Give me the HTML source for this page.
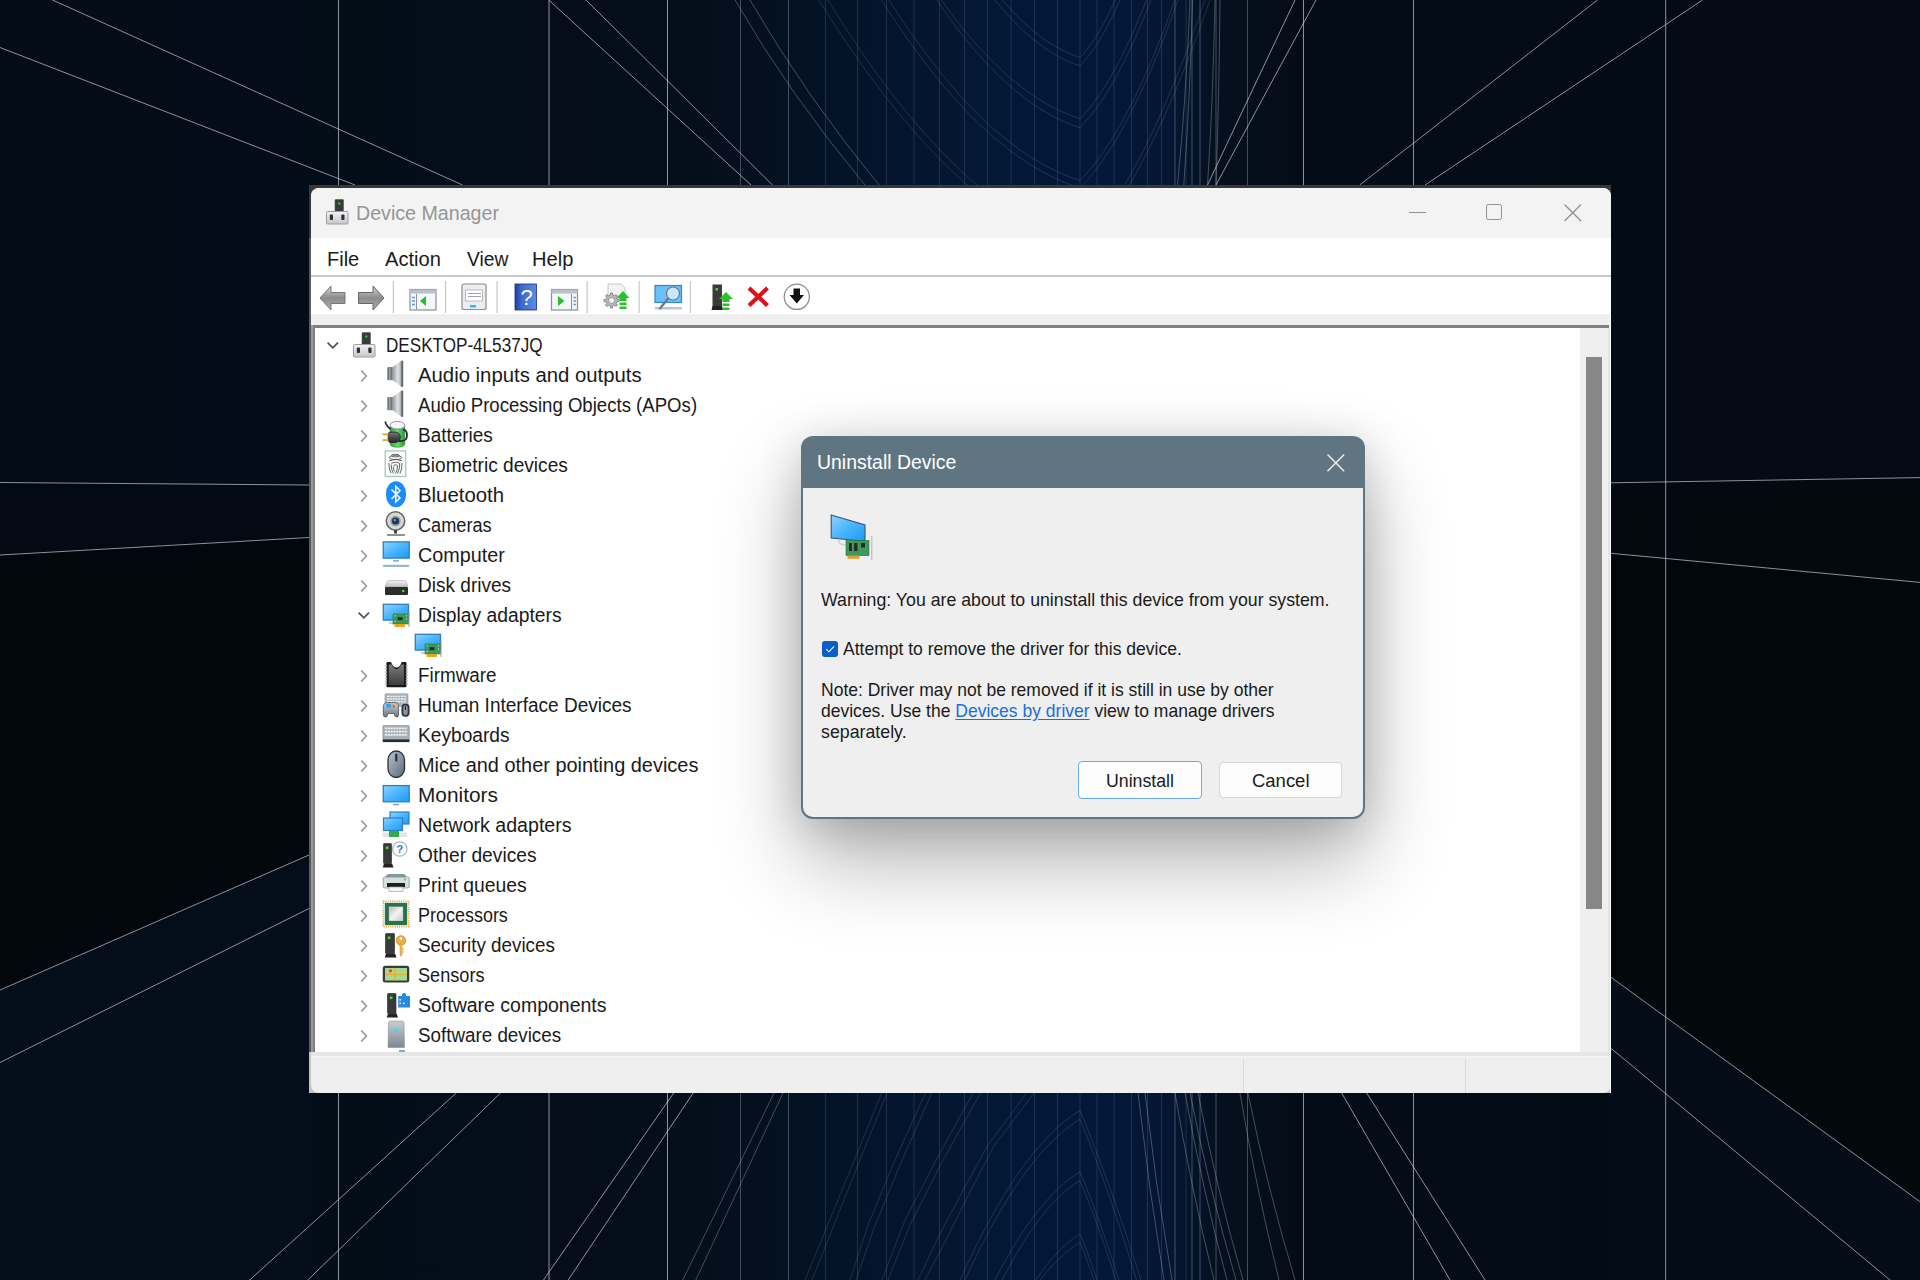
<!DOCTYPE html><html><head><meta charset="utf-8"><style>
html,body{margin:0;padding:0;}
body{width:1920px;height:1280px;overflow:hidden;position:relative;background:#030d19;font-family:"Liberation Sans", sans-serif;}
.a{position:absolute;}
.t{position:absolute;white-space:pre;}

</style></head><body>
<div class="a" style="left:0;top:0;width:1920px;height:1280px;background:linear-gradient(90deg,#030c17 0px,#040e1a 640px,#04101f 760px,#03142c 880px,#031835 980px,#03183a 1100px,#041632 1170px,#05101f 1215px,#040c17 1300px,#030a14 1920px);"></div>
<svg width="0" height="0" style="position:absolute"><defs>
<linearGradient id="gScr" x1="0" y1="0" x2="1" y2="1"><stop offset="0" stop-color="#8fd3ff"/><stop offset="0.5" stop-color="#4ab4ff"/><stop offset="1" stop-color="#1a9af5"/></linearGradient>
<linearGradient id="gSpk" x1="0" y1="0" x2="1" y2="0"><stop offset="0" stop-color="#5d636b"/><stop offset="0.45" stop-color="#b9bec4"/><stop offset="0.8" stop-color="#d8dcdf"/><stop offset="1" stop-color="#7a8088"/></linearGradient>
<linearGradient id="gBase" x1="0" y1="0" x2="0" y2="1"><stop offset="0" stop-color="#f2f2f4"/><stop offset="1" stop-color="#c4c6ca"/></linearGradient>
<linearGradient id="gMouse" x1="0" y1="0" x2="1" y2="1"><stop offset="0" stop-color="#b8c4d0"/><stop offset="1" stop-color="#5a6878"/></linearGradient>
<linearGradient id="gTower" x1="0" y1="0" x2="0" y2="1"><stop offset="0" stop-color="#c8ced6"/><stop offset="1" stop-color="#7d8791"/></linearGradient>
<linearGradient id="gDisk" x1="0" y1="0" x2="0" y2="1"><stop offset="0" stop-color="#f4f4f4"/><stop offset="1" stop-color="#bdbdbd"/></linearGradient>
<linearGradient id="gGreen" x1="0" y1="0" x2="1" y2="0"><stop offset="0" stop-color="#2a9a3a"/><stop offset="0.5" stop-color="#6ad86a"/><stop offset="1" stop-color="#2a9a3a"/></linearGradient>
<linearGradient id="gBack" x1="0" y1="0" x2="0" y2="1"><stop offset="0" stop-color="#d4d4d4"/><stop offset="0.5" stop-color="#8c8c8c"/><stop offset="1" stop-color="#b0b0b0"/></linearGradient>
<linearGradient id="gHelp" x1="0" y1="0" x2="1" y2="0"><stop offset="0" stop-color="#1f3f9a"/><stop offset="0.3" stop-color="#3a6ad0"/><stop offset="1" stop-color="#5a8ae8"/></linearGradient>
<linearGradient id="gMag" x1="0" y1="0" x2="1" y2="0"><stop offset="0" stop-color="#4e5660"/><stop offset="0.5" stop-color="#9aa2aa"/><stop offset="1" stop-color="#5a626a"/></linearGradient>
<linearGradient id="gCone" x1="0" y1="0" x2="1" y2="0"><stop offset="0" stop-color="#8a9096"/><stop offset="0.6" stop-color="#dfe1e3"/><stop offset="1" stop-color="#b4b8bc"/></linearGradient>
<linearGradient id="gRim" x1="0" y1="0" x2="1" y2="0"><stop offset="0" stop-color="#9aa0a6"/><stop offset="0.5" stop-color="#6a7076"/><stop offset="1" stop-color="#50565c"/></linearGradient>
<linearGradient id="gPlug" x1="0" y1="0" x2="0" y2="1"><stop offset="0" stop-color="#7a7a7a"/><stop offset="0.5" stop-color="#4a4a4a"/><stop offset="1" stop-color="#2a2a2a"/></linearGradient>
<linearGradient id="gChip" x1="0" y1="0" x2="1" y2="1"><stop offset="0" stop-color="#b8b8b8"/><stop offset="0.5" stop-color="#f4f4f4"/><stop offset="1" stop-color="#c8c8c8"/></linearGradient>
<linearGradient id="gFw" x1="0" y1="0" x2="0" y2="1"><stop offset="0" stop-color="#7a7a7a"/><stop offset="1" stop-color="#3c3c3c"/></linearGradient>
<linearGradient id="gPad" x1="0" y1="0" x2="0" y2="1"><stop offset="0" stop-color="#c8d0d8"/><stop offset="1" stop-color="#6a7682"/></linearGradient>
</defs></svg>
<svg style="position:absolute;left:0;top:0" width="1920" height="1280" viewBox="0 0 1920 1280" shape-rendering="geometricPrecision"><polygon points="0,555 309,537.5 309,855 0,990" fill="#02070d"/><polygon points="0,482.5 309,485 309,537.5 0,555" fill="#040a13"/><polygon points="0,990 309,855 309,1280 0,1280" fill="#030e1a"/><polygon points="1611,553.3 1920,582.4 1920,1201.7 1611,977.3" fill="#02070c"/><polygon points="1611,482.8 1920,477.6 1920,582.4 1611,553.3" fill="#03090f"/><polygon points="1611,977.3 1920,1201.7 1920,1280 1611,1280" fill="#040c17"/><line x1="338.5" y1="0" x2="338.5" y2="1280" stroke="rgba(205,210,218,0.68)"/><line x1="549" y1="0" x2="549" y2="1280" stroke="rgba(205,210,218,0.68)"/><line x1="667.5" y1="0" x2="667.5" y2="1280" stroke="rgba(205,210,218,0.68)"/><line x1="740.5" y1="0" x2="740.5" y2="1280" stroke="rgba(170,180,195,0.38)"/><line x1="788.5" y1="0" x2="788.5" y2="1280" stroke="rgba(170,180,195,0.38)"/><line x1="825.5" y1="0" x2="825.5" y2="1280" stroke="rgba(130,150,175,0.22)"/><line x1="857.5" y1="0" x2="857.5" y2="1280" stroke="rgba(130,150,175,0.22)"/><line x1="886.5" y1="0" x2="886.5" y2="1280" stroke="rgba(130,150,175,0.22)"/><line x1="914" y1="0" x2="914" y2="1280" stroke="rgba(130,150,175,0.22)"/><line x1="939.5" y1="0" x2="939.5" y2="1280" stroke="rgba(130,150,175,0.22)"/><line x1="964.5" y1="0" x2="964.5" y2="1280" stroke="rgba(130,150,175,0.22)"/><line x1="987.5" y1="0" x2="987.5" y2="1280" stroke="rgba(130,150,175,0.22)"/><line x1="1011" y1="0" x2="1011" y2="1280" stroke="rgba(130,150,175,0.22)"/><line x1="1034.5" y1="0" x2="1034.5" y2="1280" stroke="rgba(130,150,175,0.22)"/><line x1="1057.5" y1="0" x2="1057.5" y2="1280" stroke="rgba(130,150,175,0.22)"/><line x1="1080" y1="0" x2="1080" y2="1280" stroke="rgba(130,150,175,0.22)"/><line x1="1097" y1="0" x2="1097" y2="1280" stroke="rgba(130,150,175,0.22)"/><line x1="1114" y1="0" x2="1114" y2="1280" stroke="rgba(130,150,175,0.22)"/><line x1="1131.5" y1="0" x2="1131.5" y2="1280" stroke="rgba(130,150,175,0.22)"/><line x1="1147.5" y1="0" x2="1147.5" y2="1280" stroke="rgba(130,150,175,0.22)"/><line x1="1161.5" y1="0" x2="1161.5" y2="1280" stroke="rgba(130,150,175,0.22)"/><line x1="1175" y1="0" x2="1175" y2="1280" stroke="rgba(170,180,195,0.38)"/><line x1="1186" y1="0" x2="1186" y2="1280" stroke="rgba(130,150,175,0.22)"/><line x1="1192" y1="0" x2="1192" y2="1280" stroke="rgba(170,180,195,0.38)"/><line x1="1200" y1="0" x2="1200" y2="1280" stroke="rgba(170,180,195,0.38)"/><line x1="1216" y1="0" x2="1216" y2="1280" stroke="rgba(170,180,195,0.38)"/><line x1="1247.5" y1="0" x2="1247.5" y2="1280" stroke="rgba(170,180,195,0.38)"/><line x1="1303.5" y1="0" x2="1303.5" y2="1280" stroke="rgba(205,210,218,0.68)"/><line x1="1413.5" y1="0" x2="1413.5" y2="1280" stroke="rgba(205,210,218,0.68)"/><line x1="1665.7" y1="0" x2="1665.7" y2="1280" stroke="rgba(205,210,218,0.68)"/><line x1="774" y1="1093" x2="682.8" y2="1280" stroke="rgba(170,180,195,0.38)"/><line x1="783" y1="1093" x2="695.8" y2="1280" stroke="rgba(170,180,195,0.38)"/><line x1="52.5" y1="0" x2="462.5" y2="185" stroke="rgba(205,210,218,0.68)"/><line x1="0" y1="47.5" x2="355" y2="185" stroke="rgba(205,210,218,0.68)"/><line x1="548.75" y1="0" x2="751" y2="185" stroke="rgba(205,210,218,0.68)"/><line x1="586" y1="0" x2="772.5" y2="185" stroke="rgba(205,210,218,0.68)"/><line x1="1295" y1="0" x2="1207.5" y2="185" stroke="rgba(205,210,218,0.68)"/><line x1="1316" y1="0" x2="1216" y2="185" stroke="rgba(205,210,218,0.68)"/><line x1="1597.5" y1="0" x2="1359.7" y2="185" stroke="rgba(205,210,218,0.68)"/><line x1="1702.5" y1="0" x2="1425" y2="185" stroke="rgba(205,210,218,0.68)"/><line x1="1611" y1="482.8" x2="1920" y2="477.6" stroke="rgba(205,210,218,0.68)"/><line x1="1611" y1="553.3" x2="1920" y2="582.4" stroke="rgba(205,210,218,0.68)"/><line x1="1611" y1="977.3" x2="1920" y2="1201.7" stroke="rgba(205,210,218,0.68)"/><line x1="1611" y1="1048.3" x2="1890" y2="1280" stroke="rgba(205,210,218,0.68)"/><line x1="0" y1="482.5" x2="309" y2="485" stroke="rgba(205,210,218,0.68)"/><line x1="0" y1="555" x2="309" y2="537.5" stroke="rgba(205,210,218,0.68)"/><line x1="0" y1="990" x2="309" y2="855" stroke="rgba(205,210,218,0.68)"/><line x1="0" y1="1062.5" x2="309" y2="908.5" stroke="rgba(205,210,218,0.68)"/><line x1="456.25" y1="1093" x2="247.5" y2="1282" stroke="rgba(205,210,218,0.68)"/><line x1="500.5" y1="1093" x2="307.8" y2="1280" stroke="rgba(205,210,218,0.68)"/><line x1="673.7" y1="1093" x2="543.5" y2="1280" stroke="rgba(205,210,218,0.68)"/><line x1="693.2" y1="1093" x2="568.2" y2="1280" stroke="rgba(205,210,218,0.68)"/><line x1="1341.7" y1="1093" x2="1450" y2="1280" stroke="rgba(205,210,218,0.68)"/><line x1="1366.7" y1="1093" x2="1485" y2="1280" stroke="rgba(205,210,218,0.68)"/><path d="M735,0 Q790,95 865,185" fill="none" stroke="rgba(170,180,195,0.38)"/><path d="M750,0 Q805,95 879,185" fill="none" stroke="rgba(170,180,195,0.38)"/><path d="M1190,0 Q1186,100 1177.5,185" fill="none" stroke="rgba(170,180,195,0.38)"/><path d="M1192.5,0 Q1190,100 1183.75,185" fill="none" stroke="rgba(170,180,195,0.38)"/><path d="M1215,0 Q1213,100 1207.5,185" fill="none" stroke="rgba(170,180,195,0.38)"/><path d="M1220,0 Q1219,100 1216,185" fill="none" stroke="rgba(170,180,195,0.38)"/><path d="M1080.0,245.0 L1064.2,239.5 L1048.5,232.6 L1032.7,224.5 L1017.0,215.0 L1001.2,204.3 L985.5,192.2 L969.7,178.9 L954.0,164.2 L938.2,148.2 L922.4,131.0 L906.7,112.4 L890.9,92.5 L875.2,71.4 L859.4,48.9 L843.7,25.1 L827.9,0.0 M1080.0,245.0 L1087.8,236.7 L1095.6,227.5 L1103.4,217.3 L1111.2,206.2 L1119.1,194.2 L1126.9,181.2 L1134.7,167.3 L1142.5,152.5 L1150.3,136.7 L1158.1,120.0 L1165.9,102.3 L1173.8,83.8 L1181.6,64.2 L1189.4,43.8 L1197.2,22.3 L1205.0,0.0" fill="none" stroke="rgba(130,150,175,0.22)"/><path d="M1080.0,252.0 L1063.7,246.3 L1047.4,239.2 L1031.0,230.8 L1014.7,221.1 L998.4,210.0 L982.1,197.6 L965.8,183.8 L949.5,168.8 L933.1,152.3 L916.8,134.6 L900.5,115.5 L884.2,95.1 L867.9,73.3 L851.5,50.2 L835.2,25.8 L818.9,-0.0 M1080.0,252.0 L1088.1,243.4 L1096.2,233.8 L1104.4,223.3 L1112.5,211.9 L1120.6,199.5 L1128.8,186.1 L1136.9,171.8 L1145.0,156.5 L1153.1,140.3 L1161.2,123.1 L1169.4,105.0 L1177.5,85.9 L1185.6,65.8 L1193.8,44.8 L1201.9,22.9 L1210.0,0.0" fill="none" stroke="rgba(130,150,175,0.22)"/><path d="M1080.0,57.4 L1075.2,55.8 L1070.3,53.9 L1065.5,51.7 L1060.6,49.3 L1055.8,46.6 L1050.9,43.7 L1046.0,40.5 L1041.2,37.0 L1036.3,33.3 L1031.5,29.3 L1026.7,25.1 L1021.8,20.6 L1016.9,15.8 L1012.1,10.8 L1007.2,5.5 L1002.4,-0.0 M1080.0,57.4 L1082.2,55.1 L1084.4,52.7 L1086.6,50.0 L1088.8,47.2 L1090.9,44.3 L1093.1,41.1 L1095.3,37.8 L1097.5,34.3 L1099.7,30.6 L1101.9,26.8 L1104.1,22.8 L1106.2,18.6 L1108.4,14.2 L1110.6,9.6 L1112.8,4.9 L1115.0,0.0" fill="none" stroke="rgba(130,150,175,0.22)"/><path d="M1080.0,65.7 L1074.7,63.9 L1069.4,61.8 L1064.0,59.4 L1058.7,56.6 L1053.4,53.6 L1048.1,50.3 L1042.8,46.6 L1037.5,42.7 L1032.1,38.4 L1026.8,33.9 L1021.5,29.0 L1016.2,23.8 L1010.9,18.3 L1005.5,12.5 L1000.2,6.4 L994.9,0.0 M1080.0,65.7 L1082.5,63.1 L1085.0,60.3 L1087.5,57.3 L1090.0,54.1 L1092.5,50.7 L1095.0,47.1 L1097.5,43.3 L1100.0,39.3 L1102.5,35.1 L1105.0,30.7 L1107.5,26.1 L1110.0,21.2 L1112.5,16.2 L1115.0,11.0 L1117.5,5.6 L1120.0,0.0" fill="none" stroke="rgba(130,150,175,0.22)"/><path d="M1080.0,118.6 L1071.3,115.6 L1062.7,112.0 L1054.0,107.9 L1045.3,103.1 L1036.6,97.8 L1028.0,91.8 L1019.3,85.3 L1010.6,78.2 L1001.9,70.5 L993.2,62.2 L984.6,53.3 L975.9,43.8 L967.2,33.8 L958.6,23.1 L949.9,11.8 L941.2,0.0 M1080.0,118.6 L1084.2,114.2 L1088.3,109.5 L1092.5,104.3 L1096.6,98.7 L1100.8,92.7 L1104.9,86.3 L1109.1,79.5 L1113.2,72.3 L1117.4,64.7 L1121.6,56.7 L1125.7,48.3 L1129.9,39.4 L1134.0,30.2 L1138.2,20.5 L1142.3,10.5 L1146.5,0.0" fill="none" stroke="rgba(130,150,175,0.22)"/><path d="M1080.0,127.6 L1071.0,124.5 L1062.1,120.7 L1053.1,116.3 L1044.2,111.3 L1035.2,105.6 L1026.3,99.2 L1017.3,92.2 L1008.4,84.6 L999.4,76.3 L990.4,67.3 L981.5,57.7 L972.5,47.5 L963.6,36.6 L954.6,25.0 L945.7,12.8 L936.7,0.0 M1080.0,127.6 L1084.4,122.9 L1088.9,117.8 L1093.3,112.3 L1097.8,106.3 L1102.2,99.9 L1106.6,93.0 L1111.1,85.7 L1115.5,77.9 L1119.9,69.8 L1124.4,61.1 L1128.8,52.0 L1133.2,42.5 L1137.7,32.5 L1142.1,22.1 L1146.6,11.3 L1151.0,0.0" fill="none" stroke="rgba(130,150,175,0.22)"/><path d="M1080.0,180.5 L1068.1,176.3 L1056.1,171.2 L1044.2,165.1 L1032.2,158.1 L1020.3,150.2 L1008.4,141.2 L996.4,131.4 L984.5,120.6 L972.6,108.8 L960.6,96.1 L948.7,82.5 L936.8,67.9 L924.8,52.3 L912.9,35.8 L900.9,18.4 L889.0,0.0 M1080.0,180.5 L1085.9,174.2 L1091.9,167.3 L1097.8,159.7 L1103.8,151.4 L1109.7,142.5 L1115.6,132.9 L1121.6,122.6 L1127.5,111.6 L1133.4,100.0 L1139.4,87.7 L1145.3,74.8 L1151.2,61.2 L1157.2,46.9 L1163.1,31.9 L1169.1,16.3 L1175.0,0.0" fill="none" stroke="rgba(130,150,175,0.22)"/><path d="M1080.0,188.0 L1067.6,183.7 L1055.2,178.3 L1042.8,172.0 L1030.4,164.7 L1018.0,156.4 L1005.6,147.1 L993.2,136.9 L980.8,125.6 L968.4,113.4 L956.0,100.1 L943.6,85.9 L931.2,70.7 L918.8,54.5 L906.4,37.3 L894.0,19.2 L881.6,0.0 M1080.0,188.0 L1086.1,181.5 L1092.2,174.3 L1098.4,166.5 L1104.5,157.9 L1110.6,148.6 L1116.8,138.6 L1122.9,127.9 L1129.0,116.5 L1135.1,104.4 L1141.2,91.6 L1147.4,78.1 L1153.5,63.9 L1159.6,49.0 L1165.8,33.3 L1171.9,17.0 L1178.0,0.0" fill="none" stroke="rgba(130,150,175,0.22)"/><path d="M1080.0,1110.5 L1072.5,1115.4 L1065.0,1121.0 L1057.5,1127.4 L1050.0,1134.6 L1042.5,1142.5 L1035.0,1151.2 L1027.5,1160.7 L1020.0,1170.9 L1012.5,1181.8 L1005.0,1193.6 L997.5,1206.1 L990.0,1219.3 L982.5,1233.4 L975.0,1248.1 L967.5,1263.7 L960.0,1280.0 M1080.0,1110.5 L1083.8,1119.7 L1087.6,1129.1 L1091.4,1138.7 L1095.2,1148.5 L1099.0,1158.5 L1102.8,1168.6 L1106.6,1178.9 L1110.5,1189.4 L1114.3,1200.1 L1118.1,1211.0 L1121.9,1222.0 L1125.7,1233.2 L1129.5,1244.7 L1133.3,1256.3 L1137.1,1268.0 L1140.9,1280.0" fill="none" stroke="rgba(130,150,175,0.22)"/><path d="M1080.0,1119.3 L1072.8,1124.0 L1065.6,1129.4 L1058.4,1135.5 L1051.2,1142.3 L1044.1,1149.8 L1036.9,1158.1 L1029.7,1167.0 L1022.5,1176.7 L1015.3,1187.1 L1008.1,1198.2 L1000.9,1210.1 L993.8,1222.6 L986.6,1235.9 L979.4,1249.9 L972.2,1264.6 L965.0,1280.0 M1080.0,1119.3 L1083.5,1127.9 L1087.1,1136.6 L1090.6,1145.6 L1094.1,1154.8 L1097.7,1164.1 L1101.2,1173.7 L1104.7,1183.4 L1108.2,1193.4 L1111.8,1203.5 L1115.3,1213.9 L1118.8,1224.4 L1122.4,1235.1 L1125.9,1246.0 L1129.4,1257.2 L1133.0,1268.5 L1136.5,1280.0" fill="none" stroke="rgba(130,150,175,0.22)"/><path d="M1080.0,1171.8 L1074.7,1175.2 L1069.4,1179.1 L1064.0,1183.4 L1058.7,1188.1 L1053.4,1193.3 L1048.1,1199.0 L1042.8,1205.1 L1037.5,1211.6 L1032.1,1218.6 L1026.8,1226.0 L1021.5,1233.9 L1016.2,1242.2 L1010.9,1251.0 L1005.5,1260.2 L1000.2,1269.9 L994.9,1280.0 M1080.0,1171.8 L1082.4,1177.7 L1084.9,1183.7 L1087.3,1189.9 L1089.8,1196.1 L1092.2,1202.5 L1094.6,1209.0 L1097.1,1215.5 L1099.5,1222.2 L1101.9,1229.1 L1104.4,1236.0 L1106.8,1243.1 L1109.2,1250.2 L1111.7,1257.5 L1114.1,1264.9 L1116.6,1272.4 L1119.0,1280.0" fill="none" stroke="rgba(130,150,175,0.22)"/><path d="M1080.0,1180.6 L1075.1,1183.7 L1070.3,1187.3 L1065.4,1191.2 L1060.5,1195.6 L1055.7,1200.3 L1050.8,1205.5 L1046.0,1211.1 L1041.1,1217.1 L1036.2,1223.5 L1031.4,1230.4 L1026.5,1237.6 L1021.7,1245.3 L1016.8,1253.3 L1011.9,1261.8 L1007.1,1270.7 L1002.2,1280.0 M1080.0,1180.6 L1082.2,1186.1 L1084.5,1191.6 L1086.8,1197.3 L1089.0,1203.0 L1091.2,1208.9 L1093.5,1214.8 L1095.8,1220.9 L1098.0,1227.0 L1100.2,1233.3 L1102.5,1239.7 L1104.8,1246.1 L1107.0,1252.7 L1109.2,1259.4 L1111.5,1266.2 L1113.8,1273.0 L1116.0,1280.0" fill="none" stroke="rgba(130,150,175,0.22)"/><path d="M1080.0,1233.9 L1077.2,1235.6 L1074.5,1237.5 L1071.7,1239.6 L1069.0,1241.8 L1066.2,1244.1 L1063.4,1246.6 L1060.7,1249.3 L1057.9,1252.1 L1055.1,1255.0 L1052.4,1258.1 L1049.6,1261.4 L1046.8,1264.8 L1044.1,1268.4 L1041.3,1272.1 L1038.6,1276.0 L1035.8,1280.0 M1080.0,1233.9 L1081.1,1236.5 L1082.1,1239.1 L1083.2,1241.7 L1084.2,1244.4 L1085.3,1247.2 L1086.4,1249.9 L1087.4,1252.8 L1088.5,1255.6 L1089.6,1258.5 L1090.6,1261.5 L1091.7,1264.5 L1092.8,1267.5 L1093.8,1270.5 L1094.9,1273.7 L1095.9,1276.8 L1097.0,1280.0" fill="none" stroke="rgba(130,150,175,0.22)"/><path d="M1080.0,1242.6 L1077.5,1244.1 L1075.0,1245.8 L1072.5,1247.6 L1070.0,1249.4 L1067.5,1251.4 L1065.0,1253.5 L1062.5,1255.7 L1060.0,1257.9 L1057.6,1260.3 L1055.1,1262.8 L1052.6,1265.4 L1050.1,1268.1 L1047.6,1270.9 L1045.1,1273.9 L1042.6,1276.9 L1040.1,1280.0 M1080.0,1242.6 L1080.9,1244.7 L1081.8,1246.9 L1082.6,1249.0 L1083.5,1251.2 L1084.4,1253.5 L1085.2,1255.7 L1086.1,1258.0 L1087.0,1260.3 L1087.9,1262.7 L1088.8,1265.1 L1089.6,1267.5 L1090.5,1269.9 L1091.4,1272.4 L1092.2,1274.9 L1093.1,1277.4 L1094.0,1280.0" fill="none" stroke="rgba(130,150,175,0.22)"/><path d="M1026.7,1093 L987.7,1145.6 L964.6,1187.5 L940,1233.7 L918,1280" fill="none" stroke="rgba(130,150,175,0.22)" stroke-linejoin="round"/><path d="M1033.9,1093 L994,1146 L971,1190 L947,1238 L925,1280" fill="none" stroke="rgba(130,150,175,0.22)" stroke-linejoin="round"/><path d="M973.2,1093 L940,1152.8 L905,1220 L882,1280" fill="none" stroke="rgba(130,150,175,0.22)" stroke-linejoin="round"/><path d="M980.5,1093 L940,1165.8 L910,1225 L888,1280" fill="none" stroke="rgba(130,150,175,0.22)" stroke-linejoin="round"/><path d="M925.4,1093 L895,1160 L868,1225 L850,1280" fill="none" stroke="rgba(130,150,175,0.22)" stroke-linejoin="round"/><path d="M931.7,1093 L900,1165 L874,1228 L856,1280" fill="none" stroke="rgba(130,150,175,0.22)" stroke-linejoin="round"/><path d="M881.7,1093 L840,1195 L805,1280" fill="none" stroke="rgba(130,150,175,0.22)" stroke-linejoin="round"/><path d="M886.9,1093 L840,1209.7 L812,1280" fill="none" stroke="rgba(130,150,175,0.22)" stroke-linejoin="round"/><path d="M1138,1093 Q1148.4,1186 1164,1280" fill="none" stroke="rgba(170,180,195,0.38)"/><path d="M1145,1093 Q1155.8,1186 1172,1280" fill="none" stroke="rgba(170,180,195,0.38)"/><path d="M1175,1093 Q1190.6,1186 1214,1280" fill="none" stroke="rgba(170,180,195,0.38)"/><path d="M1185,1093 Q1201.8,1186 1227,1280" fill="none" stroke="rgba(170,180,195,0.38)"/><path d="M1190,1093 Q1208.4,1186 1236,1280" fill="none" stroke="rgba(170,180,195,0.38)"/><path d="M1198,1093 Q1216.0,1186 1243,1280" fill="none" stroke="rgba(170,180,195,0.38)"/><path d="M1240,1093 Q1255.6,1186 1279,1280" fill="none" stroke="rgba(170,180,195,0.38)"/><path d="M1248,1093 Q1266.8,1186 1295,1280" fill="none" stroke="rgba(170,180,195,0.38)"/></svg>
<div class="a" style="left:309px;top:185px;width:1302px;height:53px;background:#383838;"></div>
<div class="a" style="left:309px;top:1052px;width:1302px;height:41px;background:#c4c4c4;"></div>
<div class="a" style="left:311px;top:188px;width:1300px;height:905px;background:#efefef;border-radius:8px 8px 8px 8px;overflow:hidden;">
</div>
<div class="a" style="left:311px;top:188px;width:1300px;height:50px;background:#f3f3f3;border-radius:8px 8px 0 0;"></div>
<div class="a" style="left:309px;top:238px;width:2px;height:814px;background:#5a5a5a;"></div>
<div class="a" style="left:311px;top:238px;width:1300px;height:37px;background:#fff;"></div>
<div class="a" style="left:311px;top:275px;width:1300px;height:2px;background:#c9c9c9;"></div>
<div class="a" style="left:311px;top:277px;width:1300px;height:37px;background:#fff;"></div>
<div class="a" style="left:311px;top:314px;width:1300px;height:11px;background:#efefef;"></div>
<div class="a" style="left:311px;top:325px;width:1298px;height:3px;background:#808080;"></div>
<div class="a" style="left:311px;top:325px;width:2px;height:728px;background:#9a9a9a;"></div>
<div class="a" style="left:313px;top:325px;width:2px;height:728px;background:#808080;"></div>
<div class="a" style="left:315px;top:328px;width:1265px;height:724px;background:#fff;"></div>
<div class="a" style="left:1580px;top:328px;width:28px;height:724px;background:#efefef;"></div>
<div class="a" style="left:1608px;top:328px;width:2px;height:724px;background:#e4e4e4;"></div>
<div class="a" style="left:1610px;top:277px;width:1px;height:816px;background:#fff;"></div>
<div class="a" style="left:1586px;top:357px;width:16px;height:552px;background:#878787;"></div>
<div class="a" style="left:311px;top:1052px;width:1299px;height:4px;background:#e6e6e6;"></div>
<div class="a" style="left:311px;top:1056px;width:1299px;height:1px;background:#f4f4f4;"></div>
<div class="a" style="left:1243px;top:1059px;width:1px;height:34px;background:#dadada;"></div>
<div class="a" style="left:1465px;top:1059px;width:1px;height:34px;background:#dadada;"></div>
<svg class="a" style="left:326px;top:199px" width="23" height="26" viewBox="0 0 23 26"><rect x="9" y="0.5" width="8.5" height="12" rx="0.8" fill="#3a3a3a" stroke="#555" stroke-width="0.6"/><rect x="12.3" y="3.5" width="2" height="2" fill="#34d834"/><rect x="0.5" y="12.5" width="21.5" height="12.5" rx="1" fill="url(#gBase)" stroke="#9c9ea2" stroke-width="1"/><rect x="3.8" y="15.5" width="3.2" height="5.5" rx="1" fill="#303030"/><rect x="15.3" y="15.5" width="3.2" height="5.5" rx="1" fill="#303030"/></svg>
<div class="t" style="left:356.2px;top:203.25px;font-size:20.5px;line-height:20.5px;color:#959595;transform:scaleX(0.9580);transform-origin:0 0;">Device Manager</div>
<div class="a" style="left:1409px;top:212px;width:16.5px;height:1.2px;background:#909090;"></div>
<div class="a" style="left:1485.6px;top:204.3px;width:14px;height:14px;border:1.3px solid #929292;border-radius:2.5px;"></div>
<svg class="a" style="left:1560px;top:200px" width="26" height="26"><path d="M4.5,4.5 L21,21 M21,4.5 L4.5,21" stroke="#909090" stroke-width="1.3"/></svg>
<div class="t" style="left:326.5px;top:249.79px;font-size:19.5px;line-height:19.5px;color:#1a1a1a;transform:scaleX(1.0248);transform-origin:0 0;">File</div>
<div class="t" style="left:385.3px;top:249.79px;font-size:19.5px;line-height:19.5px;color:#1a1a1a;transform:scaleX(1.0313);transform-origin:0 0;">Action</div>
<div class="t" style="left:466.7px;top:249.79px;font-size:19.5px;line-height:19.5px;color:#1a1a1a;transform:scaleX(0.9852);transform-origin:0 0;">View</div>
<div class="t" style="left:531.6px;top:249.79px;font-size:19.5px;line-height:19.5px;color:#1a1a1a;transform:scaleX(1.0297);transform-origin:0 0;">Help</div>
<svg class="a" style="left:0;top:0" width="1920" height="330" viewBox="0 0 1920 330"><path d="M320,298 L331,286 L331,292.5 L345,292.5 L345,303.5 L331,303.5 L331,310 Z" fill="url(#gBack)" stroke="#777" stroke-width="1"/><path d="M384,298 L373,286 L373,292.5 L358.5,292.5 L358.5,303.5 L373,303.5 L373,310 Z" fill="url(#gBack)" stroke="#666" stroke-width="1"/><rect x="392.8" y="281" width="1.2" height="32" fill="#c8c8c8"/><rect x="444.9" y="281" width="1.2" height="32" fill="#c8c8c8"/><rect x="496.4" y="281" width="1.2" height="32" fill="#c8c8c8"/><rect x="586.5" y="281" width="1.2" height="32" fill="#c8c8c8"/><rect x="638.5" y="281" width="1.2" height="32" fill="#c8c8c8"/><rect x="689.8" y="281" width="1.2" height="32" fill="#c8c8c8"/><rect x="410" y="289.5" width="26" height="20.5" fill="#f4f6f8" stroke="#8a9098" stroke-width="1.2"/><rect x="410" y="289.5" width="26" height="4" fill="#b8c0c8"/><rect x="416" y="294" width="1" height="15.5" fill="#8a9098"/><path d="M412,297.5 H415 M412,301 H415 M412,304.5 H415" stroke="#5a9ae0" stroke-width="1.3"/><path d="M420,301 L426,296 L426,306 Z" fill="#2cbc2c"/><rect x="462" y="284" width="24" height="25.5" rx="2" fill="#eceef0" stroke="#8a8e92" stroke-width="1.2"/><rect x="465.5" y="290" width="17" height="11" fill="#fff" stroke="#a8acb0" stroke-width="0.8"/><path d="M468,293.5 H481 M468,296.5 H481" stroke="#a0a4a8" stroke-width="1"/><rect x="470" y="305" width="6" height="2.5" fill="#30b8f0"/><rect x="515" y="284" width="21.5" height="26" fill="url(#gHelp)" stroke="#1a2f80" stroke-width="0.8"/><text x="526.5" y="305" font-family="Liberation Sans" font-size="22" fill="#fff" text-anchor="middle">?</text><rect x="551.5" y="289.5" width="26" height="20.5" fill="#f4f6f8" stroke="#8a9098" stroke-width="1.2"/><rect x="551.5" y="289.5" width="26" height="4" fill="#b8c0c8"/><rect x="571" y="294" width="1" height="15.5" fill="#8a9098"/><path d="M573.5,297.5 H576 M573.5,301 H576 M573.5,304.5 H576" stroke="#5a9ae0" stroke-width="1.3"/><path d="M558,296 L564.5,301 L558,306 Z" fill="#2cbc2c"/><path d="M608,284 L621,284 L625,288 L625,298 L608,298 Z" fill="#f4f4f4" stroke="#bbb" stroke-width="0.8"/><path d="M616.97,299.28 L619.04,299.51 L619.04,301.49 L616.97,301.72 L616.23,303.50 L617.53,305.13 L616.13,306.53 L614.50,305.23 L612.72,305.97 L612.49,308.04 L610.51,308.04 L610.28,305.97 L608.50,305.23 L606.87,306.53 L605.47,305.13 L606.77,303.50 L606.03,301.72 L603.96,301.49 L603.96,299.51 L606.03,299.28 L606.77,297.50 L605.47,295.87 L606.87,294.47 L608.50,295.77 L610.28,295.03 L610.51,292.96 L612.49,292.96 L612.72,295.03 L614.50,295.77 L616.13,294.47 L617.53,295.87 L616.23,297.50 Z" fill="#b8b8b8" stroke="#7a7a7a" stroke-width="0.8"/><circle cx="611.5" cy="300.5" r="3" fill="#f4f4f4" stroke="#8a8a8a" stroke-width="0.8"/><path d="M616.5,298 L623,291 L629.5,298 Z" fill="#2cc02c"/><path d="M619.5,298 H626.5 V301 H619.5 Z M619.5,302.5 H626.5 V305 H619.5 Z M619.5,306.5 H626.5 V309 H619.5 Z" fill="#2cc02c"/><rect x="655" y="285.5" width="26.5" height="17" fill="#6cc0f8" stroke="#2a88d0" stroke-width="1.2"/><rect x="655" y="307" width="27" height="2.5" fill="#b8c8d8"/><circle cx="673" cy="293.5" r="6.5" fill="#c8e8ff" stroke="#777" stroke-width="1.2"/><path d="M668.5,298 L659.5,309" stroke="#777" stroke-width="2.4"/><rect x="712.5" y="284.5" width="9.5" height="22" fill="#3a3a3a"/><rect x="715.5" y="288" width="2.5" height="2.5" fill="#3ddc3d"/><path d="M711.5,310 L712.5,306 L722,306 L723,310 Z" fill="#222"/><path d="M719,299 L726,292 L733,299 Z" fill="#2cc02c"/><path d="M722.5,299 H729.5 V302 H722.5 Z M722.5,303.5 H729.5 V306 H722.5 Z M722.5,307.5 H729.5 V310 H722.5 Z" fill="#2cc02c"/><path d="M749,288 L767.5,305.5 M767.5,288 L749,305.5" stroke="#e0101a" stroke-width="4.2" stroke-linecap="butt"/><circle cx="796.8" cy="296.8" r="12.6" fill="#fff" stroke="#8a8a8a" stroke-width="1.2"/><path d="M793.5,288.5 H800 V295 H804 L796.8,303.5 L789.5,295 H793.5 Z" fill="#111"/></svg>
<svg class="a" style="left:324.5px;top:339.5px" width="16" height="12"><path d="M2.6,2.6 L7.8,7.8 L13,2.6" fill="none" stroke="#505050" stroke-width="1.7"/></svg>
<svg class="a" style="left:352.5px;top:332px" width="23" height="26" viewBox="0 0 23 26"><rect x="9" y="0.5" width="8.5" height="12" rx="0.8" fill="#3a3a3a" stroke="#555" stroke-width="0.6"/><rect x="12.3" y="3.5" width="2" height="2" fill="#34d834"/><rect x="0.5" y="12.5" width="21.5" height="12.5" rx="1" fill="url(#gBase)" stroke="#9c9ea2" stroke-width="1"/><rect x="3.8" y="15.5" width="3.2" height="5.5" rx="1" fill="#303030"/><rect x="15.3" y="15.5" width="3.2" height="5.5" rx="1" fill="#303030"/></svg>
<div class="t" style="left:386px;top:335.07px;font-size:20px;line-height:20px;color:#1a1a1a;transform:scaleX(0.8550);transform-origin:0 0;">DESKTOP-4L537JQ</div>
<svg class="a" style="left:358.2px;top:367.5px" width="12" height="16"><path d="M3.3,2.6 L8.4,8 L3.3,13.4" fill="none" stroke="#9a9a9a" stroke-width="1.6"/></svg>
<svg class="a" style="left:382px;top:360px" width="28" height="28" viewBox="0 0 28 28"><rect x="5.4" y="7" width="4.8" height="13.3" rx="1" fill="url(#gMag)"/><path d="M10,7.6 L19.3,0.8 L19.3,26.6 L10,19.7 Z" fill="url(#gCone)"/><rect x="18.6" y="0.4" width="2.6" height="26.6" rx="1.2" fill="url(#gRim)"/></svg>
<div class="t" style="left:417.6px;top:365.07px;font-size:20px;line-height:20px;color:#1a1a1a;transform:scaleX(1.0156);transform-origin:0 0;">Audio inputs and outputs</div>
<svg class="a" style="left:358.2px;top:397.5px" width="12" height="16"><path d="M3.3,2.6 L8.4,8 L3.3,13.4" fill="none" stroke="#9a9a9a" stroke-width="1.6"/></svg>
<svg class="a" style="left:382px;top:390px" width="28" height="28" viewBox="0 0 28 28"><rect x="5.4" y="7" width="4.8" height="13.3" rx="1" fill="url(#gMag)"/><path d="M10,7.6 L19.3,0.8 L19.3,26.6 L10,19.7 Z" fill="url(#gCone)"/><rect x="18.6" y="0.4" width="2.6" height="26.6" rx="1.2" fill="url(#gRim)"/></svg>
<div class="t" style="left:417.6px;top:395.07px;font-size:20px;line-height:20px;color:#1a1a1a;transform:scaleX(0.9299);transform-origin:0 0;">Audio Processing Objects (APOs)</div>
<svg class="a" style="left:358.2px;top:427.5px" width="12" height="16"><path d="M3.3,2.6 L8.4,8 L3.3,13.4" fill="none" stroke="#9a9a9a" stroke-width="1.6"/></svg>
<svg class="a" style="left:382px;top:420px" width="28" height="28" viewBox="0 0 28 28"><path d="M8,6 L8,23.5 Q8,27.3 15.3,27.3 Q22.8,27.3 22.8,23.5 L22.8,6 Z" fill="url(#gGreen)" stroke="#2a8a34" stroke-width="0.6"/><ellipse cx="15.4" cy="5.2" rx="7.4" ry="3.8" fill="#f6f6fa" stroke="#9a8ac0" stroke-width="1"/><path d="M3.2,1.5 Q4,6 8.5,9" fill="none" stroke="#2a2a2a" stroke-width="1.6"/><path d="M17,21 Q27,22 24.5,12 Q23.5,9.5 21,10" fill="none" stroke="#2a2a2a" stroke-width="1.8"/><path d="M6.2,14.5 Q6.2,12.2 8.5,12.2 L14,12.2 Q18.3,13 18.3,17.3 Q18.3,21.6 14,22.4 L8.5,22.4 Q6.2,22.4 6.2,20.1 Z" fill="url(#gPlug)" stroke="#1e1e1e" stroke-width="0.8"/><rect x="0.6" y="13.4" width="5.8" height="1.9" fill="#d8b030"/><rect x="0.6" y="19.2" width="5.8" height="1.9" fill="#d8b030"/></svg>
<div class="t" style="left:417.6px;top:425.07px;font-size:20px;line-height:20px;color:#1a1a1a;transform:scaleX(0.9482);transform-origin:0 0;">Batteries</div>
<svg class="a" style="left:358.2px;top:457.5px" width="12" height="16"><path d="M3.3,2.6 L8.4,8 L3.3,13.4" fill="none" stroke="#9a9a9a" stroke-width="1.6"/></svg>
<svg class="a" style="left:382px;top:450px" width="28" height="28" viewBox="0 0 28 28"><rect x="3.2" y="0.9" width="20.5" height="25.6" fill="#fbfbfb" stroke="#a6c8bf" stroke-width="1.3"/><ellipse cx="13.5" cy="5.6" rx="4.2" ry="1.3" fill="none" stroke="#555" stroke-width="0.9"/><ellipse cx="13.5" cy="7.6" rx="6.2" ry="2" fill="none" stroke="#555" stroke-width="0.9"/><path d="M7.2,10.8 Q13.5,7.8 19.8,10.8 M6.8,13 Q7,20 9,23 M20,13 Q20,20 18,23.5 M9.3,13.2 Q13.5,11 17.7,13.2 Q18,19 15.5,23.5 M9.2,14.5 Q9.2,20 11.5,23.5 M11.5,15.5 Q13.5,14 15.5,15.5 Q15.8,20 13.5,23.5 M11.6,16.5 Q11.3,20 12.5,21.5" fill="none" stroke="#555" stroke-width="0.9"/></svg>
<div class="t" style="left:417.6px;top:455.07px;font-size:20px;line-height:20px;color:#1a1a1a;transform:scaleX(0.9562);transform-origin:0 0;">Biometric devices</div>
<svg class="a" style="left:358.2px;top:487.5px" width="12" height="16"><path d="M3.3,2.6 L8.4,8 L3.3,13.4" fill="none" stroke="#9a9a9a" stroke-width="1.6"/></svg>
<svg class="a" style="left:382px;top:480px" width="28" height="28" viewBox="0 0 28 28"><rect x="4" y="1.2" width="20" height="26" rx="10" ry="12" fill="#1a8cff"/><path d="M9.5,9.5 L18,18 L13.8,22 L13.8,6.5 L18,10.5 L9.5,19" fill="none" stroke="#fff" stroke-width="1.5" stroke-linejoin="miter"/></svg>
<div class="t" style="left:417.6px;top:485.07px;font-size:20px;line-height:20px;color:#1a1a1a;transform:scaleX(1.0187);transform-origin:0 0;">Bluetooth</div>
<svg class="a" style="left:358.2px;top:517.5px" width="12" height="16"><path d="M3.3,2.6 L8.4,8 L3.3,13.4" fill="none" stroke="#9a9a9a" stroke-width="1.6"/></svg>
<svg class="a" style="left:382px;top:510px" width="28" height="28" viewBox="0 0 28 28"><circle cx="13.5" cy="11" r="9.2" fill="#d8d8d8" stroke="#666" stroke-width="1.6"/><circle cx="13.5" cy="11" r="5.2" fill="#9a9a9a"/><circle cx="13.5" cy="11" r="3.6" fill="#1e3a5a"/><circle cx="12.8" cy="10.2" r="1.1" fill="#6ab0ff"/><rect x="12" y="20" width="3" height="3.5" fill="#444"/><rect x="5" y="24.2" width="18" height="1.6" fill="#777"/></svg>
<div class="t" style="left:417.6px;top:515.07px;font-size:20px;line-height:20px;color:#1a1a1a;transform:scaleX(0.9071);transform-origin:0 0;">Cameras</div>
<svg class="a" style="left:358.2px;top:547.5px" width="12" height="16"><path d="M3.3,2.6 L8.4,8 L3.3,13.4" fill="none" stroke="#9a9a9a" stroke-width="1.6"/></svg>
<svg class="a" style="left:382px;top:540px" width="28" height="28" viewBox="0 0 28 28"><rect x="1.25" y="1.9" width="26" height="16.2" fill="url(#gScr)" stroke="#2b7fc0" stroke-width="1.3"/><rect x="11" y="20.2" width="6" height="1.3" fill="#7a98b8"/><rect x="0.8" y="24.7" width="26.5" height="2.4" rx="1" fill="#9fb4c8"/></svg>
<div class="t" style="left:417.6px;top:545.07px;font-size:20px;line-height:20px;color:#1a1a1a;transform:scaleX(0.9890);transform-origin:0 0;">Computer</div>
<svg class="a" style="left:358.2px;top:577.5px" width="12" height="16"><path d="M3.3,2.6 L8.4,8 L3.3,13.4" fill="none" stroke="#9a9a9a" stroke-width="1.6"/></svg>
<svg class="a" style="left:382px;top:570px" width="28" height="28" viewBox="0 0 28 28"><path d="M5,12 Q5,10.5 7,10.5 L22,10.5 Q24,10.5 24.5,12.5 L26,17 L3,17 Z" fill="url(#gDisk)" stroke="#aaa" stroke-width="0.6"/><rect x="3" y="17" width="23" height="8" rx="1.2" fill="#2c2c2c"/><rect x="20" y="20" width="2.4" height="2" fill="#33dd44"/></svg>
<div class="t" style="left:417.6px;top:575.07px;font-size:20px;line-height:20px;color:#1a1a1a;transform:scaleX(0.9520);transform-origin:0 0;">Disk drives</div>
<svg class="a" style="left:356px;top:609.8px" width="16" height="12"><path d="M2.6,2.6 L7.8,7.8 L13,2.6" fill="none" stroke="#505050" stroke-width="1.7"/></svg>
<svg class="a" style="left:382px;top:600px" width="28" height="28" viewBox="0 0 28 28"><rect x="1.3" y="4.3" width="25.2" height="15.8" fill="url(#gScr)" stroke="#2f7fb8" stroke-width="1.3"/><rect x="7" y="22.5" width="4" height="1" fill="#8aa0b8"/><rect x="11" y="14" width="15.5" height="10" fill="#3a9a5c" stroke="#2a7a44" stroke-width="0.6"/><rect x="15.5" y="17.2" width="5" height="3" fill="#2a2a2a"/><path d="M12.6,15.8 h1 M12.6,21.6 h1 M24,15.8 h1 M24,19 h1" stroke="#e8f4e8" stroke-width="1"/><rect x="12.5" y="24" width="10.5" height="3" fill="#f0a818"/><path d="M16,24 v3 M19.5,24 v3" stroke="#d88a10" stroke-width="0.6"/><rect x="26.5" y="11" width="1" height="16" fill="#9a9a9a"/></svg>
<div class="t" style="left:417.6px;top:605.07px;font-size:20px;line-height:20px;color:#1a1a1a;transform:scaleX(0.9640);transform-origin:0 0;">Display adapters</div>
<svg class="a" style="left:414px;top:630px" width="28" height="28" viewBox="0 0 28 28"><rect x="1.3" y="4.3" width="25.2" height="15.8" fill="url(#gScr)" stroke="#2f7fb8" stroke-width="1.3"/><rect x="7" y="22.5" width="4" height="1" fill="#8aa0b8"/><rect x="11" y="14" width="15.5" height="10" fill="#3a9a5c" stroke="#2a7a44" stroke-width="0.6"/><rect x="15.5" y="17.2" width="5" height="3" fill="#2a2a2a"/><path d="M12.6,15.8 h1 M12.6,21.6 h1 M24,15.8 h1 M24,19 h1" stroke="#e8f4e8" stroke-width="1"/><rect x="12.5" y="24" width="10.5" height="3" fill="#f0a818"/><path d="M16,24 v3 M19.5,24 v3" stroke="#d88a10" stroke-width="0.6"/><rect x="26.5" y="11" width="1" height="16" fill="#9a9a9a"/></svg>
<svg class="a" style="left:358.2px;top:667.5px" width="12" height="16"><path d="M3.3,2.6 L8.4,8 L3.3,13.4" fill="none" stroke="#9a9a9a" stroke-width="1.6"/></svg>
<svg class="a" style="left:382px;top:660px" width="28" height="28" viewBox="0 0 28 28"><path d="M4.4,3 Q4.4,2 5.4,2 L9,2 Q11,7.5 14.4,7.5 Q17.8,7.5 19.8,2 L23.5,2 Q24.5,2 24.5,3 L24.5,26.2 Q24.5,27.2 23.5,27.2 L5.4,27.2 Q4.4,27.2 4.4,26.2 Z" fill="#1a1a1a"/><path d="M6.8,4.6 L9.8,4.6 Q11.5,9.2 14.4,9.2 Q17.3,9.2 19,4.6 L22,4.6 L22,25 L6.8,25 Z" fill="url(#gFw)"/><rect x="2.6" y="5.2" width="2.6" height="1.6" rx="0.8" fill="#b4c0d0"/><rect x="23.6" y="5.2" width="2.6" height="1.6" rx="0.8" fill="#b4c0d0"/><rect x="2.6" y="8.2" width="2.6" height="1.6" rx="0.8" fill="#b4c0d0"/><rect x="23.6" y="8.2" width="2.6" height="1.6" rx="0.8" fill="#b4c0d0"/><rect x="2.6" y="11.2" width="2.6" height="1.6" rx="0.8" fill="#b4c0d0"/><rect x="23.6" y="11.2" width="2.6" height="1.6" rx="0.8" fill="#b4c0d0"/><rect x="2.6" y="14.2" width="2.6" height="1.6" rx="0.8" fill="#b4c0d0"/><rect x="23.6" y="14.2" width="2.6" height="1.6" rx="0.8" fill="#b4c0d0"/><rect x="2.6" y="17.2" width="2.6" height="1.6" rx="0.8" fill="#b4c0d0"/><rect x="23.6" y="17.2" width="2.6" height="1.6" rx="0.8" fill="#b4c0d0"/><rect x="2.6" y="20.2" width="2.6" height="1.6" rx="0.8" fill="#b4c0d0"/><rect x="23.6" y="20.2" width="2.6" height="1.6" rx="0.8" fill="#b4c0d0"/><rect x="2.6" y="23.2" width="2.6" height="1.6" rx="0.8" fill="#b4c0d0"/><rect x="23.6" y="23.2" width="2.6" height="1.6" rx="0.8" fill="#b4c0d0"/></svg>
<div class="t" style="left:417.6px;top:665.07px;font-size:20px;line-height:20px;color:#1a1a1a;transform:scaleX(0.9431);transform-origin:0 0;">Firmware</div>
<svg class="a" style="left:358.2px;top:697.5px" width="12" height="16"><path d="M3.3,2.6 L8.4,8 L3.3,13.4" fill="none" stroke="#9a9a9a" stroke-width="1.6"/></svg>
<svg class="a" style="left:382px;top:690px" width="28" height="28" viewBox="0 0 28 28"><rect x="3" y="3.8" width="23" height="12.5" rx="0.8" fill="#aeb6be" stroke="#8a9298" stroke-width="0.6"/><path d="M5,6.4 H24" stroke="#f2f2f2" stroke-width="1.3" stroke-dasharray="2 0.8"/><path d="M5,9.0 H24" stroke="#f2f2f2" stroke-width="1.3" stroke-dasharray="2 0.8"/><path d="M5,11.600000000000001 H24" stroke="#f2f2f2" stroke-width="1.3" stroke-dasharray="2 0.8"/><path d="M1.3,17 Q1.3,12.6 5.5,12.6 L13,12.6 Q16.6,12.6 16.6,17 L16.6,24.5 Q16.6,27 14.6,27 Q12.6,27 12.2,23.5 L6,23.5 Q5.6,27 3.5,27 Q1.3,27 1.3,24.5 Z" fill="url(#gPad)" stroke="#3a4048" stroke-width="0.7"/><rect x="4.2" y="13.8" width="4.6" height="3.8" fill="#2aa0ff"/><rect x="9.5" y="14" width="2.4" height="3.6" fill="#e8a030"/><rect x="11" y="15.5" width="1.8" height="2" fill="#e04a30"/><rect x="19.5" y="13.7" width="8" height="13" rx="3.6" fill="#2e343a"/><rect x="21.3" y="15.3" width="4.4" height="9.8" rx="2" fill="#8a96a4"/><rect x="23" y="16" width="1" height="4" fill="#222"/></svg>
<div class="t" style="left:417.6px;top:695.07px;font-size:20px;line-height:20px;color:#1a1a1a;transform:scaleX(0.9512);transform-origin:0 0;">Human Interface Devices</div>
<svg class="a" style="left:358.2px;top:727.5px" width="12" height="16"><path d="M3.3,2.6 L8.4,8 L3.3,13.4" fill="none" stroke="#9a9a9a" stroke-width="1.6"/></svg>
<svg class="a" style="left:382px;top:720px" width="28" height="28" viewBox="0 0 28 28"><rect x="0.9" y="5.6" width="26.4" height="16.2" rx="0.8" fill="#a8b0b8" stroke="#8a9096" stroke-width="0.7"/><path d="M3,8.4 H25.5" stroke="#f4f4f4" stroke-width="1.7" stroke-dasharray="2.1 0.7"/><path d="M3,11.600000000000001 H25.5" stroke="#f4f4f4" stroke-width="1.7" stroke-dasharray="2.1 0.7"/><path d="M3,14.8 H25.5" stroke="#f4f4f4" stroke-width="1.7" stroke-dasharray="2.1 0.7"/><rect x="0.9" y="19.4" width="26.4" height="2.6" fill="#262b30"/></svg>
<div class="t" style="left:417.6px;top:725.07px;font-size:20px;line-height:20px;color:#1a1a1a;transform:scaleX(0.9579);transform-origin:0 0;">Keyboards</div>
<svg class="a" style="left:358.2px;top:757.5px" width="12" height="16"><path d="M3.3,2.6 L8.4,8 L3.3,13.4" fill="none" stroke="#9a9a9a" stroke-width="1.6"/></svg>
<svg class="a" style="left:382px;top:750px" width="28" height="28" viewBox="0 0 28 28"><rect x="6" y="1" width="16.5" height="26.5" rx="8.25" ry="9" fill="url(#gMouse)" stroke="#2a2e34" stroke-width="1.3"/><rect x="13.2" y="3.5" width="2.2" height="8" rx="1" fill="#2a2e34"/></svg>
<div class="t" style="left:417.6px;top:755.07px;font-size:20px;line-height:20px;color:#1a1a1a;transform:scaleX(0.9967);transform-origin:0 0;">Mice and other pointing devices</div>
<svg class="a" style="left:358.2px;top:787.5px" width="12" height="16"><path d="M3.3,2.6 L8.4,8 L3.3,13.4" fill="none" stroke="#9a9a9a" stroke-width="1.6"/></svg>
<svg class="a" style="left:382px;top:780px" width="28" height="28" viewBox="0 0 28 28"><rect x="1.25" y="5.6" width="26" height="16.2" fill="url(#gScr)" stroke="#2b7fc0" stroke-width="1.3"/><rect x="11" y="23.9" width="6" height="1.3" fill="#7a98b8"/></svg>
<div class="t" style="left:417.6px;top:785.07px;font-size:20px;line-height:20px;color:#1a1a1a;transform:scaleX(1.0410);transform-origin:0 0;">Monitors</div>
<svg class="a" style="left:358.2px;top:817.5px" width="12" height="16"><path d="M3.3,2.6 L8.4,8 L3.3,13.4" fill="none" stroke="#9a9a9a" stroke-width="1.6"/></svg>
<svg class="a" style="left:382px;top:810px" width="28" height="28" viewBox="0 0 28 28"><rect x="8" y="2" width="19" height="12" fill="url(#gScr)" stroke="#2b7fc0" stroke-width="1.2"/><rect x="1.5" y="8" width="19" height="12.5" fill="url(#gScr)" stroke="#2b7fc0" stroke-width="1.2"/><rect x="0.5" y="22.5" width="24.5" height="4.5" fill="#e4e4e4"/><rect x="7" y="21" width="10" height="6" fill="#33aa44"/></svg>
<div class="t" style="left:417.6px;top:815.07px;font-size:20px;line-height:20px;color:#1a1a1a;transform:scaleX(0.9799);transform-origin:0 0;">Network adapters</div>
<svg class="a" style="left:358.2px;top:847.5px" width="12" height="16"><path d="M3.3,2.6 L8.4,8 L3.3,13.4" fill="none" stroke="#9a9a9a" stroke-width="1.6"/></svg>
<svg class="a" style="left:382px;top:840px" width="28" height="28" viewBox="0 0 28 28"><rect x="1.5" y="3.5" width="8" height="20" rx="0.8" fill="#3a3a3a" stroke="#222" stroke-width="0.6"/><rect x="3.8" y="6.5" width="2.6" height="2.6" fill="#3ddc3d"/><path d="M0.7,27.5 L2.1,23.5 L10.1,23.5 L11.5,27.5 Z" fill="#222"/><circle cx="17.8" cy="9" r="7.2" fill="#fdfdfd" stroke="#b4b4b4" stroke-width="1.3"/><text x="17.8" y="13.2" font-family="Liberation Sans" font-size="11.5" font-weight="bold" fill="#3a7ad0" text-anchor="middle">?</text></svg>
<div class="t" style="left:417.6px;top:845.07px;font-size:20px;line-height:20px;color:#1a1a1a;transform:scaleX(0.9612);transform-origin:0 0;">Other devices</div>
<svg class="a" style="left:358.2px;top:877.5px" width="12" height="16"><path d="M3.3,2.6 L8.4,8 L3.3,13.4" fill="none" stroke="#9a9a9a" stroke-width="1.6"/></svg>
<svg class="a" style="left:382px;top:870px" width="28" height="28" viewBox="0 0 28 28"><path d="M4,7 Q4,4 7,4 L21,4 Q24,4 24,7 Z" fill="#8a9298"/><rect x="9" y="5" width="10" height="1.5" fill="#3ac8a8"/><rect x="1.25" y="7" width="26" height="11" rx="1.5" fill="#d8dde0" stroke="#8a9096" stroke-width="0.8"/><rect x="5" y="13" width="18" height="4" fill="#1e1e1e"/><rect x="7" y="17" width="14" height="4.5" fill="#f4f4f4" stroke="#999" stroke-width="0.6"/><circle cx="23" cy="9.5" r="0.9" fill="#3c3"/></svg>
<div class="t" style="left:417.6px;top:875.07px;font-size:20px;line-height:20px;color:#1a1a1a;transform:scaleX(0.9671);transform-origin:0 0;">Print queues</div>
<svg class="a" style="left:358.2px;top:907.5px" width="12" height="16"><path d="M3.3,2.6 L8.4,8 L3.3,13.4" fill="none" stroke="#9a9a9a" stroke-width="1.6"/></svg>
<svg class="a" style="left:382px;top:900px" width="28" height="28" viewBox="0 0 28 28"><rect x="1.3" y="1.3" width="25.4" height="25.4" fill="none" stroke="#e0a830" stroke-width="1.4" stroke-dasharray="1.1 1.1"/><rect x="2.8" y="2.8" width="22.4" height="22.4" fill="#2e7048"/><rect x="7.2" y="7" width="13.6" height="13.6" fill="url(#gChip)" stroke="#e8ece8" stroke-width="0.6"/></svg>
<div class="t" style="left:417.6px;top:905.07px;font-size:20px;line-height:20px;color:#1a1a1a;transform:scaleX(0.8982);transform-origin:0 0;">Processors</div>
<svg class="a" style="left:358.2px;top:937.5px" width="12" height="16"><path d="M3.3,2.6 L8.4,8 L3.3,13.4" fill="none" stroke="#9a9a9a" stroke-width="1.6"/></svg>
<svg class="a" style="left:382px;top:930px" width="28" height="28" viewBox="0 0 28 28"><rect x="3.5" y="3.5" width="9" height="20" rx="0.8" fill="#3a3a3a" stroke="#222" stroke-width="0.6"/><rect x="5.8" y="6.5" width="2.6" height="2.6" fill="#3ddc3d"/><path d="M2.7,27.5 L4.1,23.5 L13.1,23.5 L14.5,27.5 Z" fill="#222"/><circle cx="19" cy="10.5" r="4.8" fill="#e8b040" stroke="#c89020" stroke-width="0.8"/><circle cx="19" cy="8.6" r="1.3" fill="#fff"/><path d="M17.6,14.5 L20.4,14.5 L20.4,25 L19,27 L17.6,25 Z" fill="#e8b040"/><path d="M20.4,19 H22 M20.4,22 H21.8" stroke="#c89020" stroke-width="1.2"/></svg>
<div class="t" style="left:417.6px;top:935.07px;font-size:20px;line-height:20px;color:#1a1a1a;transform:scaleX(0.9397);transform-origin:0 0;">Security devices</div>
<svg class="a" style="left:358.2px;top:967.5px" width="12" height="16"><path d="M3.3,2.6 L8.4,8 L3.3,13.4" fill="none" stroke="#9a9a9a" stroke-width="1.6"/></svg>
<svg class="a" style="left:382px;top:960px" width="28" height="28" viewBox="0 0 28 28"><rect x="0.75" y="5.8" width="26.5" height="16.8" rx="2.5" fill="#3a3a3a"/><rect x="3" y="8" width="22" height="12.5" fill="#a8d890"/><path d="M3,14.5 H25 M13,8 V20.5" stroke="#e8b030" stroke-width="1.6"/><circle cx="8.5" cy="10.8" r="1.6" fill="#e04040"/></svg>
<div class="t" style="left:417.6px;top:965.07px;font-size:20px;line-height:20px;color:#1a1a1a;transform:scaleX(0.9063);transform-origin:0 0;">Sensors</div>
<svg class="a" style="left:358.2px;top:997.5px" width="12" height="16"><path d="M3.3,2.6 L8.4,8 L3.3,13.4" fill="none" stroke="#9a9a9a" stroke-width="1.6"/></svg>
<svg class="a" style="left:382px;top:990px" width="28" height="28" viewBox="0 0 28 28"><rect x="5.5" y="3.5" width="8.5" height="20" rx="0.8" fill="#3a3a3a" stroke="#222" stroke-width="0.6"/><rect x="7.8" y="6.5" width="2.6" height="2.6" fill="#3ddc3d"/><path d="M4.7,27.5 L6.1,23.5 L14.6,23.5 L16.0,27.5 Z" fill="#222"/><path d="M16.2,6 H20 V4.2 Q22,1.2 24,4.2 V6 H28 V17.5 H16.2 Z" fill="#2a88e0"/><rect x="17.4" y="9" width="1.6" height="1.6" fill="#d8eafc"/><rect x="17.4" y="12.5" width="1.6" height="1.6" fill="#d8eafc"/><rect x="21" y="12.5" width="1.6" height="1.6" fill="#d8eafc"/></svg>
<div class="t" style="left:417.6px;top:995.07px;font-size:20px;line-height:20px;color:#1a1a1a;transform:scaleX(0.9745);transform-origin:0 0;">Software components</div>
<svg class="a" style="left:358.2px;top:1027.5px" width="12" height="16"><path d="M3.3,2.6 L8.4,8 L3.3,13.4" fill="none" stroke="#9a9a9a" stroke-width="1.6"/></svg>
<svg class="a" style="left:382px;top:1020px" width="28" height="28" viewBox="0 0 28 28"><path d="M6.5,3 Q6.5,1 9,1 L20,1 Q22,1 22,3 L22.5,27.5 L6,27.5 Z" fill="url(#gTower)" stroke="#8a939c" stroke-width="0.6"/><circle cx="13.8" cy="10" r="1.7" fill="#2ae0f0"/></svg>
<div class="t" style="left:417.6px;top:1025.07px;font-size:20px;line-height:20px;color:#1a1a1a;transform:scaleX(0.9396);transform-origin:0 0;">Software devices</div>
<div class="a" style="left:399px;top:1050px;width:6px;height:2px;background:#9aa4ae;"></div>
<div class="a" style="left:800.6px;top:436.2px;width:564.4px;height:382.8px;border-radius:12px;background:#607582;box-shadow:0 42px 84px rgba(0,0,0,0.30),0 6px 44px rgba(0,0,0,0.16);"></div>
<div class="a" style="left:802.6px;top:488px;width:560.4px;height:329px;border-radius:0 0 10px 10px;background:#efefef;"></div>
<div class="t" style="left:816.9px;top:452.05px;font-size:20.5px;line-height:20.5px;color:#ffffff;transform:scaleX(0.9484);transform-origin:0 0;">Uninstall Device</div>
<svg class="a" style="left:1322px;top:449px" width="28" height="28"><path d="M5.5,5.5 L22.2,22.2 M22.2,5.5 L5.5,22.2" stroke="#ececec" stroke-width="1.5"/></svg>
<svg class="a" style="left:826px;top:510px" width="52" height="54" viewBox="0 0 52 54"><path d="M5.2,5 L39,15 L39,31.2 L5.2,28 Z" fill="url(#gScr)" stroke="#3a5566" stroke-width="1.1"/><path d="M13,29 Q11,34 19,35" fill="none" stroke="#c8d0d8" stroke-width="1.6"/><rect x="20" y="30.6" width="23" height="15" fill="#3c9a5a" stroke="#2a6a3a" stroke-width="0.6"/><rect x="23" y="33" width="3" height="8" fill="#2a2a2a"/><rect x="28" y="33" width="3.5" height="8" fill="#2a2a2a"/><rect x="35" y="33" width="4" height="4.5" fill="#2a2a2a"/><rect x="21.5" y="45.6" width="12" height="3.2" fill="#e8a030"/><rect x="45" y="26" width="1.4" height="24" fill="#c4c4c4"/></svg>
<div class="t" style="left:821px;top:590.64px;font-size:18.5px;line-height:18.5px;color:#1a1a1a;transform:scaleX(0.9577);transform-origin:0 0;">Warning: You are about to uninstall this device from your system.</div>
<div class="a" style="left:821.5px;top:641px;width:16px;height:16px;border-radius:3px;background:#0a5fc8;"></div>
<svg class="a" style="left:821.5px;top:641px" width="16" height="16"><path d="M4.2,8.2 L7,10.8 L12,5.4" fill="none" stroke="#fff" stroke-width="1.1"/></svg>
<div class="t" style="left:843.2px;top:640.14px;font-size:18.5px;line-height:18.5px;color:#1a1a1a;transform:scaleX(0.9468);transform-origin:0 0;">Attempt to remove the driver for this device.</div>
<div class="t" style="left:820.8px;top:681.04px;font-size:18.5px;line-height:18.5px;color:#1a1a1a;transform:scaleX(0.9466);transform-origin:0 0;">Note: Driver may not be removed if it is still in use by other</div>
<div class="t" style="left:821px;top:702.14px;font-size:18.5px;line-height:18.5px;color:#1a1a1a;transform:scaleX(0.9465);transform-origin:0 0;">devices. Use the <span style="color:#1a6fd8;text-decoration:underline;text-underline-offset:2px;">Devices by driver</span> view to manage drivers</div>
<div class="t" style="left:820.8px;top:723.34px;font-size:18.5px;line-height:18.5px;color:#1a1a1a;transform:scaleX(0.9604);transform-origin:0 0;">separately.</div>
<div class="a" style="left:1078px;top:761px;width:124px;height:38px;box-sizing:border-box;border:1.5px solid #6aaae6;border-radius:4px;background:#fdfdfd;"></div>
<div class="a" style="left:1219px;top:762px;width:123px;height:36px;box-sizing:border-box;border:1px solid #d6d6d6;border-radius:4px;background:#fdfdfd;"></div>
<div class="t" style="left:1105.9px;top:771.64px;font-size:18.5px;line-height:18.5px;color:#1a1a1a;transform:scaleX(0.9584);transform-origin:0 0;">Uninstall</div>
<div class="t" style="left:1252.3px;top:771.64px;font-size:18.5px;line-height:18.5px;color:#1a1a1a;transform:scaleX(0.9984);transform-origin:0 0;">Cancel</div>
</body></html>
